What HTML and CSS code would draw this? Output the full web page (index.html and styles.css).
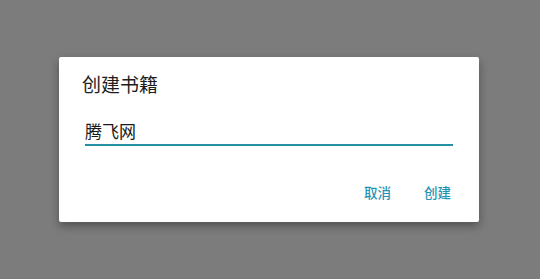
FILE: index.html
```html
<!DOCTYPE html>
<html lang="zh">
<head>
<meta charset="utf-8">
<link rel="stylesheet" href="styles.css">
</head>
<body>
<div class="dialog">
  <div class="title">创建书籍</div>
  <div class="field">
    <div class="value">腾飞网</div>
  </div>
  <div class="actions">
    <span class="btn">取消</span>
    <span class="btn">创建</span>
  </div>
</div>
</body>
</html>
```
FILE: styles.css
```css
html, body {
  margin: 0;
  padding: 0;
}
body {
  width: 540px;
  height: 279px;
  background: #7c7c7c;
  font-family: "Noto Sans CJK SC", "Noto Sans", sans-serif;
  padding: 57px 0 0 59px;
  box-sizing: border-box;
  overflow: hidden;
}
.dialog {
  width: 420px;
  height: 165px;
  background: #ffffff;
  border-radius: 2px;
  box-shadow: 0 4px 10px rgba(0, 0, 0, 0.35);
  box-sizing: border-box;
  display: flex;
  flex-direction: column;
}
.title {
  font-size: 19px;
  line-height: 24px;
  color: #1e1e1e;
  padding: 15px 0 0 23px;
}
.field {
  margin: 24px 26px 0 26px;
  border-bottom: 2px solid #2590a3;
  padding-bottom: 2px;
}
.value {
  font-size: 17px;
  line-height: 22px;
  color: #1a1a1a;
}
.actions {
  display: flex;
  justify-content: flex-end;
  gap: 33px;
  padding: 0 28px 0 0;
  margin-top: 37px;
}
.btn {
  font-size: 13.5px;
  line-height: 18px;
  color: #1f95b5;
  font-weight: 500;
}
```
